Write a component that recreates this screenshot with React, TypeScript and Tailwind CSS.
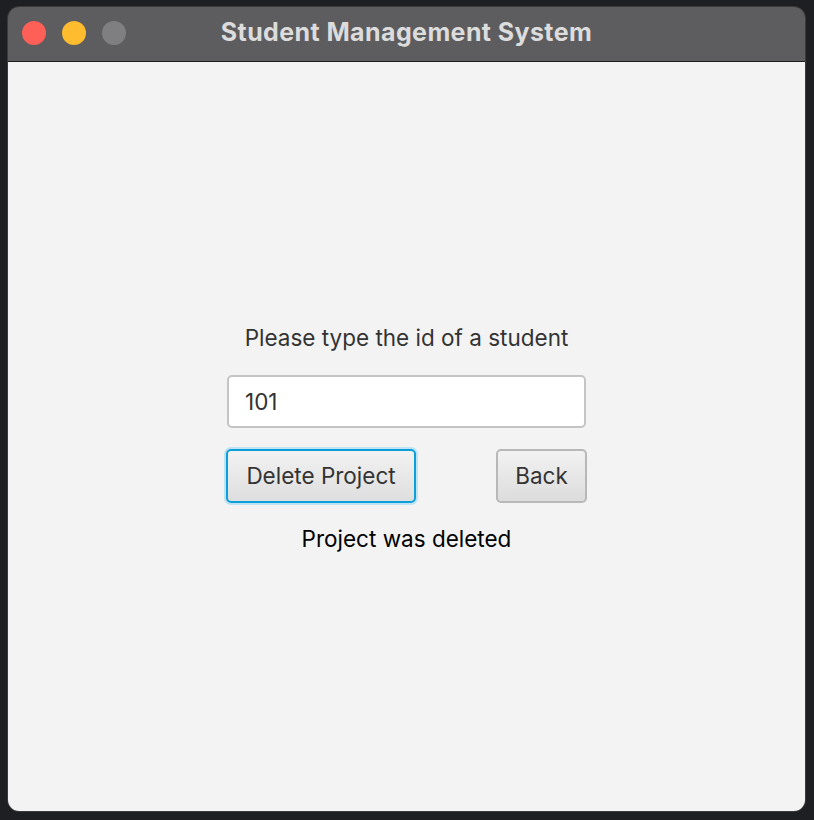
import React from "react";

const font = { fontFamily: "Inter, 'Noto Sans', sans-serif" };

export default function App() {
  return (
    <div className="w-[814px] h-[820px] bg-[#1e1f22] pt-[6px] pl-[7px]" style={font}>
      <div className="w-[799px] h-[806px] rounded-[12px] overflow-hidden flex flex-col border border-[#3a3a3a]">
        {/* title bar */}
        <div className="h-[55px] bg-[#5d5d5f] border-b border-[#1c1c1c] flex items-center relative shrink-0 pb-[2px]">
          <div className="flex items-center gap-[16px] pl-[14px]">
            <span className="w-[24px] h-[24px] rounded-full bg-[#fe5f57]" />
            <span className="w-[24px] h-[24px] rounded-full bg-[#febc2e]" />
            <span className="w-[24px] h-[24px] rounded-full bg-[#7f7f81]" />
          </div>
          <div className="absolute inset-0 flex items-center justify-center pb-[3px] pointer-events-none">
            <span className="text-[25px] font-bold text-[#dcdcdc] tracking-[0.4px]">
              Student Management System
            </span>
          </div>
        </div>

        {/* content */}
        <div className="flex-1 bg-[#f3f3f3] flex flex-col items-center pt-[263px]">
          <div className="text-[22.5px] leading-[26px] text-[#333333]">
            Please type the id of a student
          </div>
          <div className="mt-[24px] w-[359px] h-[53px] bg-white border-2 border-[#c4c4c4] rounded-[5px] flex items-center px-[16px] text-[22.5px] text-[#333333]">
            101
          </div>
          <div className="mt-[21px] w-[361px] flex justify-between">
            <button className="h-[54px] w-[190px] rounded-[5px] border-2 border-[#0a9fd8] shadow-[0_0_0_2px_#bfe3f2] bg-gradient-to-b from-[#f2f2f2] to-[#dedede] text-[22.5px] text-[#333333]">
              Delete Project
            </button>
            <button className="h-[54px] w-[91px] rounded-[5px] border-2 border-[#b8b8b8] bg-gradient-to-b from-[#f2f2f2] to-[#dcdcdc] text-[22.5px] text-[#333333]">
              Back
            </button>
          </div>
          <div className="mt-[23px] text-[22.5px] leading-[26px] text-black">
            Project was deleted
          </div>
        </div>
      </div>
    </div>
  );
}
